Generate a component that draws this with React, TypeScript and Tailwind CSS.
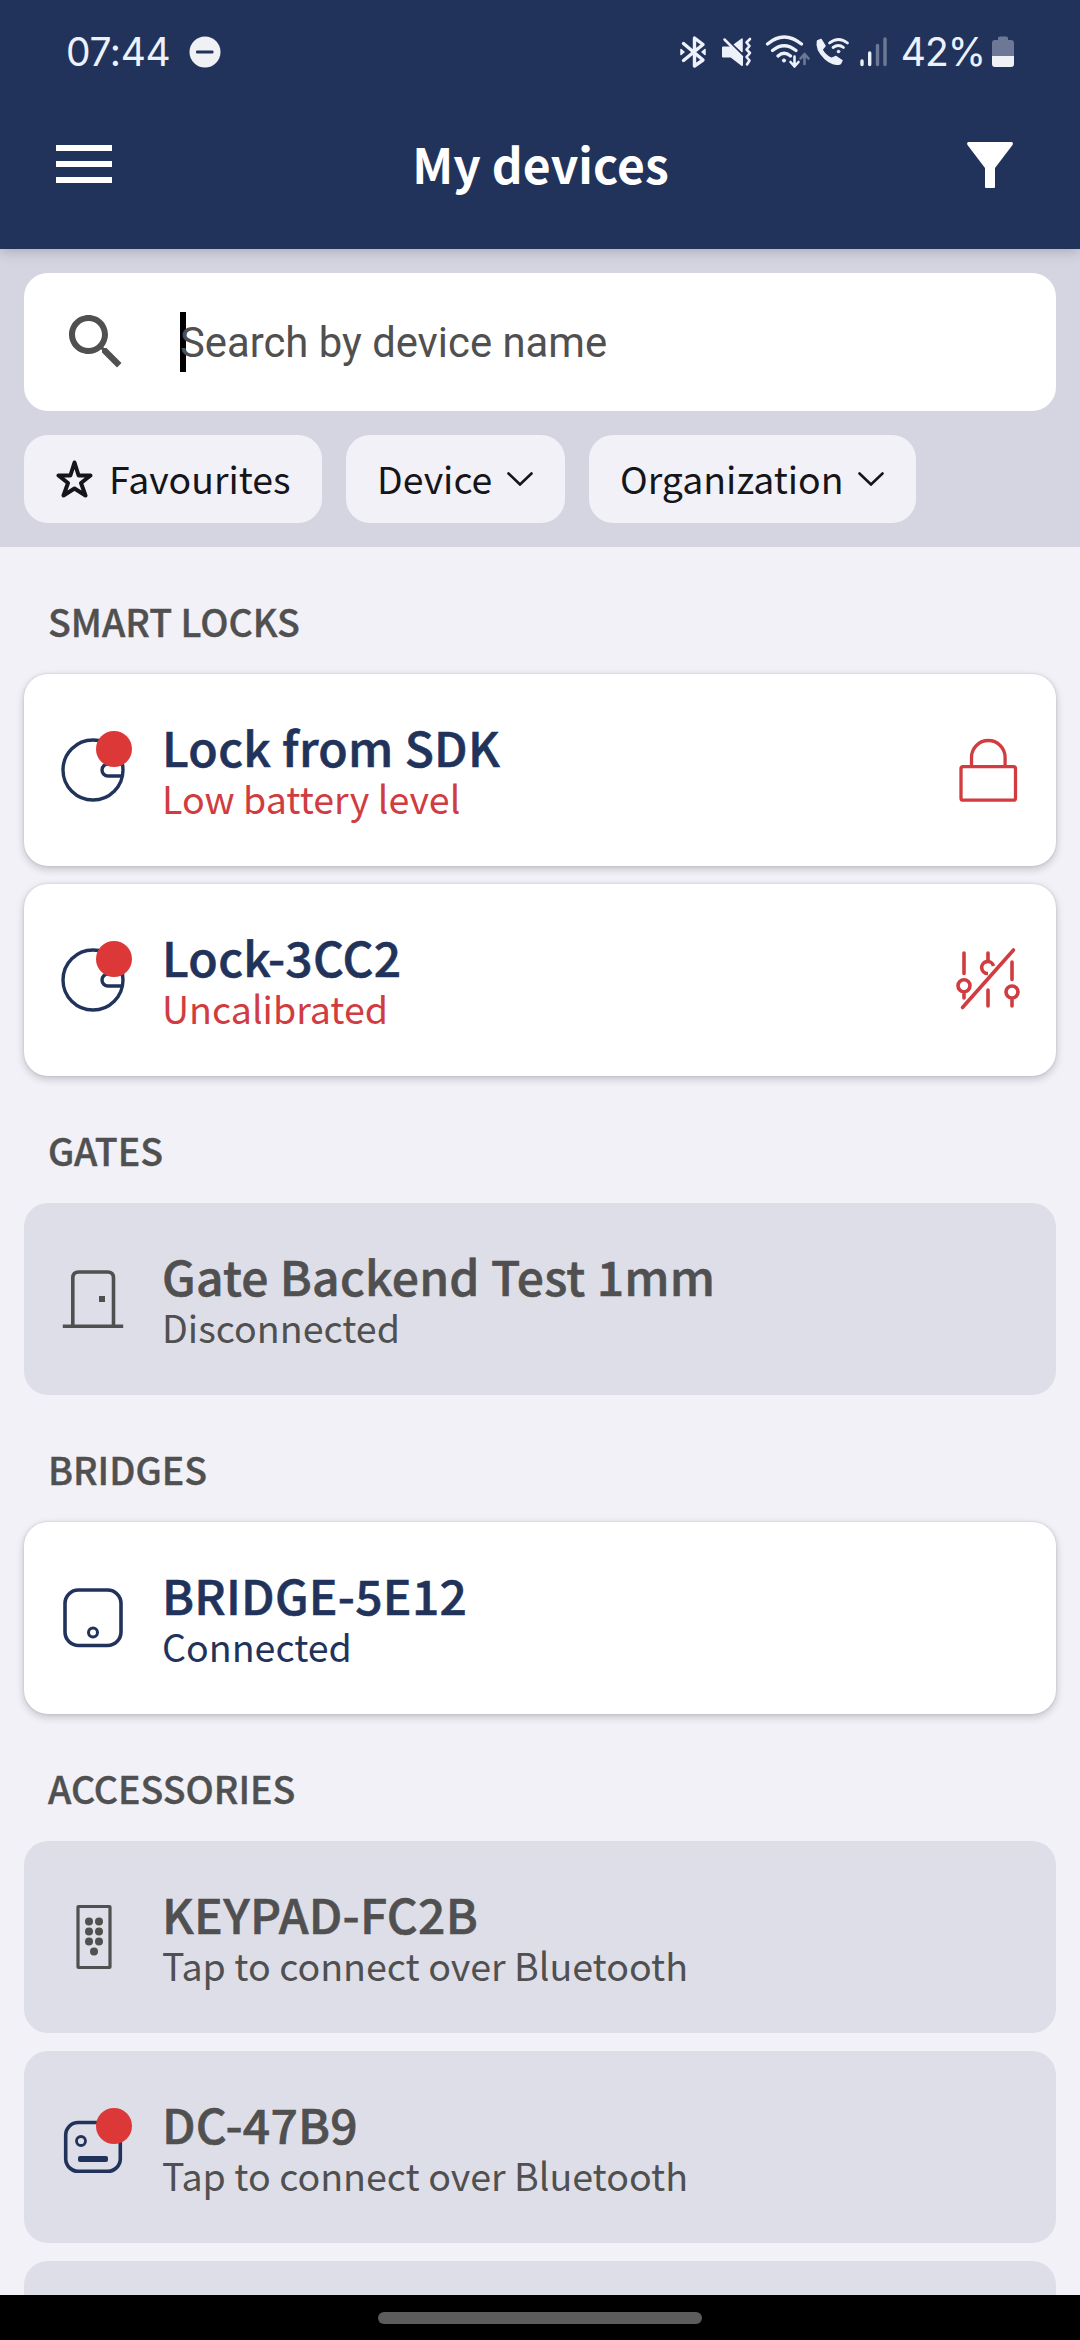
import React from "react";

const NAVY = "#22335b";
const RED = "#dc3838";
const GRAY = "#505050";

function StatusBar() {
  return (
    <div className="flex h-[104px] items-center justify-between pl-[66px] pr-[66px]">
      <div className="flex items-center gap-[19px]">
        <span className="font-['Inter',sans-serif] text-[39px] leading-[48px] tracking-[-0.4px] text-[#edf1fc]">07:44</span>
        <svg width="32" height="32" viewBox="0 0 32 32">
          <circle cx="16" cy="16" r="15.5" fill="#f0f1f5" />
          <rect x="7" y="14.5" width="17.5" height="3" rx="1" fill={NAVY} />
        </svg>
      </div>
      <div className="flex items-center">
        <svg width="212" height="40" viewBox="676 32 212 40" fill="none" stroke="#edf1fa" strokeLinecap="round" strokeLinejoin="round">
          {/* bluetooth */}
          <path d="M683.5 43.5L703 60L694.5 66V38L703 44.5L683.5 60.5" strokeWidth="3.4" />
          <path d="M681 49.500L684 52L681 54.500ZM705 49.500L702 52L705 54.500Z" fill="#edf1fa" strokeWidth="1.500" />
          {/* muted, vibrating speaker */}
          <path d="M723 47.500H731L742 58V65L731 56.500H723Z" fill="#edf1fa" strokeWidth="2" />
          <path d="M734.500 44.500L742 39V51.500Z" fill="#edf1fa" strokeWidth="1.500" />
          <path d="M724.500 39.500L742 57" strokeWidth="2.500" />
          <path d="M750 39L746.500 42.500L749.500 46L746.500 49.500L750 53L746.500 57L749.500 60.500L747 64.500" strokeWidth="2.600" />
          {/* wifi */}
          <path d="M767.500 44Q784 30 801.500 44M772.500 50.500Q784 41 796 50.500M778 56Q784 50.500 790.500 56" strokeWidth="3.200" />
          <circle cx="784" cy="60.500" r="1.600" fill="#edf1fa" strokeWidth="1" />
          <path d="M794.500 56.500V66M790.500 62L794.500 66.500L798.500 62" strokeWidth="2.600" />
          <path d="M804.500 64V54.500M800.500 58.500L804.500 54L808.500 58.500" stroke="#6c7896" strokeWidth="2.600" />
          {/* wifi calling */}
          <path d="M817.500 41L821 39.500L825 46L822 49.500Q825 55.500 831.500 58.500L836 56.500L842 60.500L840.500 63.500C832 68 815 53 817.500 41Z" fill="#edf1fa" strokeWidth="1.500" />
          <path d="M829.500 43Q838.500 36 847.500 43M833 47.500Q838.500 43.500 843.500 47.500" strokeWidth="2.800" />
          <circle cx="838.500" cy="51.500" r="1.500" fill="#edf1fa" strokeWidth="0.500" />
          {/* signal */}
          <path d="M862 61V64.500M869.700 53V64.500" strokeWidth="3.400" />
          <path d="M877.500 45.500V64.500M885 39V64.500" stroke="#6c7896" strokeWidth="3.400" />
        </svg>
        <span className="ml-[13px] font-['Inter',sans-serif] text-[39px] leading-[48px] tracking-[-1px] text-[#edf1fc]">42%</span>
        <svg className="ml-[7px]" width="22" height="32" viewBox="0 0 22 32">
          <path d="M6 4V2Q6 0.500 8 0.500H14Q16 0.500 16 2V4H19Q22 4 22 7V20H0V7Q0 4 3 4Z" fill="#6c7896" />
          <path d="M0 20H22V28Q22 31 19 31H3Q0 31 0 28Z" fill="#f0f1f5" />
        </svg>
      </div>
    </div>
  );
}

function Header() {
  return (
    <header className="relative z-10 h-[249px] bg-[#22335b] shadow-[0_3px_12px_rgba(60,50,80,0.25)]">
      <StatusBar />
      <div className="flex h-[122px] items-center justify-between pl-[56px] pr-[67px]">
        <div className="flex w-[56px] flex-col gap-[10px] pb-[2px]">
          <div className="h-[6px] bg-white" />
          <div className="h-[6px] bg-white" />
          <div className="h-[6px] bg-white" />
        </div>
        <h1 className="pb-[4px] pl-[2px] font-['Noto_Sans_CJK_SC',sans-serif] text-[48px] font-bold leading-[60px] tracking-[0.1px] text-white">My devices</h1>
        <svg width="46" height="46" viewBox="0 0 46 46">
          <path d="M1 0H45Q46.500 1 45.500 3L28 26V45Q28 46 27 46H19Q18 46 18 45V26L0.500 3Q-0.500 1 1 0Z" fill="#fff" />
        </svg>
      </div>
    </header>
  );
}

function Chevron() {
  return (
    <svg width="26" height="14" viewBox="0 0 26 14" fill="none" stroke="#15151a" strokeWidth="2.600" strokeLinecap="round">
      <path d="M1.500 1.500L13 12.500L24.500 1.500" />
    </svg>
  );
}

function Chip({ children, className }: { children: React.ReactNode; className: string }) {
  return (
    <button className={"flex h-[88px] items-center rounded-[24px] bg-[#f2f1f8] font-['Noto_Sans_CJK_SC',sans-serif] text-[37.4px] leading-[56px] text-[#15151a] " + className}>
      {children}
    </button>
  );
}

function SearchPanel() {
  return (
    <div className="flex h-[298px] flex-col gap-[24px] bg-[#d5d5e1] px-[24px] pt-[24px]">
      <div className="flex h-[138px] items-center rounded-[24px] bg-white pl-[36px]">
        <svg width="72" height="72" viewBox="0 0 24 24" fill={GRAY}>
          <path d="M15.500 14h-.79l-.28-.27C15.410 12.590 16 11.110 16 9.500 16 5.910 13.090 3 9.500 3S3 5.910 3 9.500 5.910 16 9.500 16c1.610 0 3.090-.59 4.230-1.570l.27.28v.79l5 4.990L20.490 19l-4.990-5zm-6 0C7.010 14 5 11.990 5 9.500S7.010 5 9.500 5 14 7.010 14 9.500 11.990 14 9.500 14z" />
        </svg>
        <div className="ml-[48px] h-[60px] w-[6px] bg-black" />
        <span className="relative ml-[-6px] pt-[2px] font-['Roboto',sans-serif] text-[41.8px] leading-[60px] text-[#505050]">Search by device name</span>
      </div>
      <div className="flex gap-[24px]">
        <Chip className="w-[298px] pl-[32px]">
          <svg width="37" height="38" viewBox="0 0 37 38" fill="none" stroke="#15151a" strokeWidth="4" strokeLinejoin="round">
            <path d="M18.500 2.500L22.600 15.500H34.500L25 23L29.500 35.500L18.500 28.500L7.500 35.500L12 23L2.500 15.500H14.400Z" />
          </svg>
          <span className="ml-[16px] pb-[2px]">Favourites</span>
        </Chip>
        <Chip className="w-[219px] justify-between pl-[31px] pr-[32px]">
          <span className="pb-[2px]">Device</span>
          <Chevron />
        </Chip>
        <Chip className="w-[327px] justify-between pl-[31px] pr-[32px]">
          <span className="pb-[2px]">Organization</span>
          <Chevron />
        </Chip>
      </div>
    </div>
  );
}

const SmartLockIcon = () => (
  <>
    <circle cx="40" cy="40" r="30" stroke={NAVY} strokeWidth="3.400" />
    <path d="M69 46H55A6 6 0 0 1 55 34H69" stroke={NAVY} strokeWidth="3.400" />
  </>
);

const GateIcon = () => (
  <g stroke={GRAY} strokeWidth="3.600">
    <path d="M9.800 67.200H70.200M19.800 66V19Q19.800 13 25.800 13H54.500Q60.500 13 60.500 19V66" />
    <rect x="46" y="37" width="6" height="6" fill={GRAY} stroke="none" />
  </g>
);

const BridgeIcon = () => (
  <g stroke={NAVY}>
    <rect x="12" y="12" width="56" height="55.500" rx="13.500" strokeWidth="3.600" />
    <circle cx="40" cy="54.500" r="4.500" strokeWidth="3" />
  </g>
);

const KEYS = [
  [36, 24.500], [46, 24.500], [36, 34.500], [46, 34.500], [36, 44.500], [46, 44.500], [41, 54.500],
];

const KeypadIcon = () => (
  <g fill={GRAY}>
    <rect x="25" y="9.500" width="32" height="61" rx="0.500" fill="none" stroke={GRAY} strokeWidth="3.200" />
    {KEYS.map(([x, y]) => (
      <circle key={x + "-" + y} cx={x} cy={y} r="4" />
    ))}
  </g>
);

const DoorControlIcon = () => (
  <g stroke={NAVY}>
    <rect x="12.700" y="15.500" width="54.600" height="48.800" rx="12.500" strokeWidth="3.600" />
    <circle cx="28" cy="34" r="4.500" strokeWidth="2.800" />
    <rect x="25" y="49" width="30" height="6" rx="2" fill={NAVY} stroke="none" />
  </g>
);

const LockedIcon = () => (
  <g stroke="#d03c40" strokeWidth="3.300">
    <rect x="13" y="36.700" width="54.500" height="33.500" rx="2" />
    <path d="M23.500 36V27.500A16.800 17 0 0 1 57.100 27.500V36" />
  </g>
);

const UncalibratedIcon = () => (
  <g stroke="#d03c40" strokeWidth="3.600" strokeLinecap="round">
    <path d="M16 13V33.500M40 13V20M64 22V39.500M16 54V58M40 50V66M64 60V66" />
    <circle cx="16" cy="45.700" r="6" />
    <circle cx="64" cy="52" r="6" />
    <path d="M45.500 26A6 6 0 1 0 40 33.500" strokeLinecap="butt" />
    <path d="M14.500 67.500L65.500 10" />
  </g>
);

type Tone = "alert" | "ok" | "off";

interface Device {
  name: string;
  status: string;
  tone: Tone;
  icon: React.ReactNode;
  badge?: boolean;
  action?: React.ReactNode;
}

const SECTIONS: { title: string; devices: Device[] }[] = [
  {
    title: "SMART LOCKS",
    devices: [
      { name: "Lock from SDK", status: "Low battery level", tone: "alert", icon: <SmartLockIcon />, badge: true, action: <LockedIcon /> },
      { name: "Lock-3CC2", status: "Uncalibrated", tone: "alert", icon: <SmartLockIcon />, badge: true, action: <UncalibratedIcon /> },
    ],
  },
  { title: "GATES", devices: [{ name: "Gate Backend Test 1mm", status: "Disconnected", tone: "off", icon: <GateIcon /> }] },
  { title: "BRIDGES", devices: [{ name: "BRIDGE-5E12", status: "Connected", tone: "ok", icon: <BridgeIcon /> }] },
  {
    title: "ACCESSORIES",
    devices: [
      { name: "KEYPAD-FC2B", status: "Tap to connect over Bluetooth", tone: "off", icon: <KeypadIcon /> },
      { name: "DC-47B9", status: "Tap to connect over Bluetooth", tone: "off", icon: <DoorControlIcon />, badge: true },
      { name: "", status: "", tone: "off", icon: null },
    ],
  },
];

const CARD: Record<Tone, string> = {
  alert: "bg-white shadow-[0_3px_8px_rgba(0,0,0,0.2),0_0_3px_rgba(0,0,0,0.12)]",
  ok: "bg-white shadow-[0_3px_8px_rgba(0,0,0,0.2),0_0_3px_rgba(0,0,0,0.12)]",
  off: "bg-[#dedee8]",
};
const NAME: Record<Tone, string> = { alert: "text-[#22335b]", ok: "text-[#22335b]", off: "text-[#505050]" };
const STATUS: Record<Tone, string> = { alert: "text-[#d03c40]", ok: "text-[#22335b]", off: "text-[#505050]" };

function DeviceCard({ device }: { device: Device }) {
  return (
    <div className={"flex h-[192px] shrink-0 items-center rounded-[24px] pl-[29px] pr-[28px] " + CARD[device.tone]}>
      <svg className="shrink-0" width="80" height="80" viewBox="0 0 80 80" fill="none">
        {device.icon}
        {device.badge && <circle cx="61" cy="19" r="18" fill={RED} />}
      </svg>
      <div className="ml-[29px] flex flex-1 flex-col pt-[1px] font-['Noto_Sans_CJK_SC',sans-serif]">
        <span className={"text-[48px] font-medium leading-[54px] tracking-[0.25px] [-webkit-text-stroke:0.6px_currentColor] " + NAME[device.tone]}>{device.name}</span>
        <span className={"pt-[1px] text-[37.6px] leading-[48px] " + STATUS[device.tone]}>{device.status}</span>
      </div>
      {device.action && (
        <svg width="80" height="80" viewBox="0 0 80 80" fill="none">
          {device.action}
        </svg>
      )}
    </div>
  );
}

export default function App() {
  return (
    <div className="flex h-[2340px] w-[1080px] flex-col overflow-hidden bg-[#f2f1f8]">
      <Header />
      <SearchPanel />
      <main className="h-[1748px] overflow-hidden px-[24px]">
        {SECTIONS.map((s) => (
          <section key={s.title}>
            <h2 className="flex h-[127px] items-center pl-[24px] pt-[20px] font-['Noto_Sans_CJK_SC',sans-serif] text-[37.5px] font-medium leading-[56px] text-[#505050] [-webkit-text-stroke:0.4px_currentColor]">{s.title}</h2>
            <div className="flex flex-col gap-[18px]">
              {s.devices.map((d, i) => (
                <DeviceCard key={i} device={d} />
              ))}
            </div>
          </section>
        ))}
      </main>
      <div className="flex h-[45px] items-center justify-center bg-black">
        <div className="h-[12px] w-[324px] rounded-full bg-[#5c5c5c]" />
      </div>
    </div>
  );
}
